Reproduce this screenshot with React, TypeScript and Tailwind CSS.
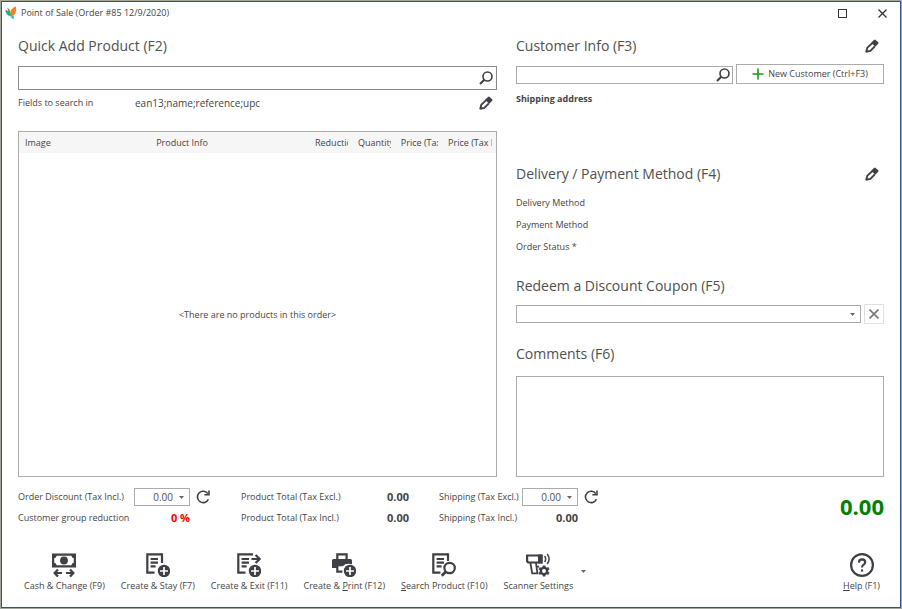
import type { ReactNode } from "react";

const DARK = "#3f3f46";

function SearchIcon() {
  return (
    <svg width="14" height="14" viewBox="0 0 14 14" fill="none" stroke={DARK} aria-hidden="true">
      <circle cx="8.5" cy="5.5" r="4.5" strokeWidth="1.6" />
      <path d="M5.3 8.7 L1 13" strokeWidth="2" />
    </svg>
  );
}

function PencilIcon() {
  return (
    <svg width="14" height="14" viewBox="0 0 14 14" aria-hidden="true">
      <path d="M9 0.9 Q9.8 0.3 10.6 0.9 L13.2 3.2 Q13.8 4 13.2 4.8 L10.3 7.8 L6 3.8 Z" fill={DARK} />
      <path d="M7 4.4 L2.4 8.6 L1.3 12.7 L5.4 11.9 L9.8 7.4" fill="none" stroke={DARK} strokeWidth="1.9" strokeLinejoin="round" />
    </svg>
  );
}

function RefreshIcon() {
  return (
    <svg width="14" height="14" viewBox="0 0 14 14" fill="none" stroke={DARK} strokeWidth="1.6" aria-hidden="true">
      <path d="M12.4 9.2 A5.7 5.7 0 1 1 11.8 3.6" />
      <path d="M13 0.4 V4.8 H8.4" />
    </svg>
  );
}

function ArrowDown() {
  return (
    <svg width="5" height="3" viewBox="0 0 5 3" aria-hidden="true">
      <path d="M0 0 H5 L2.5 3 Z" fill="#666" />
    </svg>
  );
}

function Logo() {
  return (
    <svg width="12" height="14" viewBox="0 0 12 14" aria-hidden="true">
      <path d="M10.6 0.3 Q12.4 6 8.6 9.6 L5.4 10.4 Q3.6 3.6 10.6 0.3Z" fill="#f5821f" />
      <path d="M0.2 3.4 Q2.6 5 5 5.2 L6 10 Q0.8 10 0.2 3.4Z" fill="#14b87c" />
      <path d="M2.2 1.8 Q4.8 2.6 5.2 6 L3.6 5.2Z" fill="#e8403a" />
      <path d="M5.4 10.4 L9 9.8 L8.4 13.6 L6.6 12Z" fill="#22c3e6" />
    </svg>
  );
}

// Sheet of paper shared by the order icons
function Sheet() {
  return (
    <>
      <path d="M8.5 19.6 H1.3 V1.3 H16" />
      <path d="M4.6 6 H12 M4.6 9.7 H12 M4.6 13.4 H9.6" />
    </>
  );
}

function PlusBadge() {
  return (
    <>
      <circle cx="18" cy="18" r="6.2" fill={DARK} stroke="none" />
      <path d="M18 14 V22 M14 18 H22" stroke="#fff" strokeWidth="1.7" />
    </>
  );
}

function ToolIcon({ children }: { children: ReactNode }) {
  return (
    <svg width="24" height="24" viewBox="0 0 24 24" fill="none" stroke={DARK} strokeWidth="2.2" aria-hidden="true">
      {children}
    </svg>
  );
}

function CashIcon() {
  return (
    <ToolIcon>
      <path d="M0 0.5 H24 V14.5 H0 Z" fill={DARK} stroke="none" />
      <path d="M4.6 2.8 H19.4 Q19.6 5 21.8 5.2 V9.8 Q19.6 10 19.4 12.2 H4.6 Q4.4 10 2.2 9.8 V5.2 Q4.4 5 4.6 2.8Z" fill="#fff" stroke="none" />
      <circle cx="12" cy="7.5" r="3.9" fill={DARK} stroke="none" />
      <path d="M3 20 H10 M14 20 H21" />
      <path d="M6 16.4 L2.6 20 L6 23.6 M18 16.4 L21.4 20 L18 23.6" />
    </ToolIcon>
  );
}

function StayIcon() {
  return (
    <ToolIcon>
      <Sheet />
      <path d="M16 0.3 V10" />
      <PlusBadge />
    </ToolIcon>
  );
}

function ExitIcon() {
  return (
    <ToolIcon>
      <Sheet />
      <path d="M14.5 6 H22 M18.6 2 L22.6 6 L18.6 10" />
      <PlusBadge />
    </ToolIcon>
  );
}

function PrintIcon() {
  return (
    <ToolIcon>
      <path d="M5.3 6.5 V1.3 H14.6 V6.5" />
      <path d="M1.5 6 H18.5 Q20 6 20 7.5 V11.2 Q13.5 10 10.8 13.2 H5 V15 H0 V7.5 Q0 6 1.5 6Z" fill={DARK} stroke="none" />
      <path d="M5.3 12 V18.6 H10.4" />
      <PlusBadge />
    </ToolIcon>
  );
}

function SearchProductIcon() {
  return (
    <ToolIcon>
      <Sheet />
      <path d="M16 0.3 V8" />
      <circle cx="17.6" cy="15" r="6.8" fill="#fff" stroke="none" />
      <circle cx="17.6" cy="15" r="5.2" />
      <path d="M14 18.6 L9.8 22.8" strokeWidth="2.8" />
    </ToolIcon>
  );
}

function ScannerIcon() {
  return (
    <ToolIcon>
      <path d="M1.1 2.5 H15 V9.5 H3.2 Q1.1 9.5 1.1 7.5Z" />
      <path d="M12 1.5 H16.8 V10.5 H12Z" fill={DARK} stroke="none" />
      <path d="M4.4 10 L6.2 20.4 H11.4 L10 10 M10 13.6 H13" strokeWidth="1.8" />
      <path d="M18.6 3 Q20.8 6 18.6 9 M21.2 1 Q25 6 21.2 11" strokeWidth="1.5" />
      <circle cx="18" cy="18" r="3.2" strokeWidth="2.4" />
      <path d="M18 12.4 V15 M18 21 V23.6 M13.1 15.2 L15.5 16.6 M20.5 19.4 L22.9 20.8 M13.1 20.8 L15.5 19.4 M20.5 16.6 L22.9 15.2" strokeWidth="2.6" />
    </ToolIcon>
  );
}

function HelpIcon() {
  return (
    <ToolIcon>
      <circle cx="12" cy="12" r="10.9" />
      <path d="M8.9 9.6 Q9 6.3 12.1 6.3 Q15.2 6.4 15.2 9.2 Q15.2 10.6 13.6 11.6 Q12 12.6 12 14.6" />
      <path d="M12 16.4 V18.6" />
    </ToolIcon>
  );
}

function Heading({ children }: { children: ReactNode }) {
  return <h2 className="text-[14px] leading-5 text-[#505050]">{children}</h2>;
}

function EditButton({ label }: { label: string }) {
  return (
    <button type="button" aria-label={label} className="flex size-4 items-center justify-center">
      <PencilIcon />
    </button>
  );
}

function AmountSelect({ id }: { id: string }) {
  return (
    <div className="relative h-[18px]">
      <select id={id} className="block h-full w-full appearance-none border border-[#ababab] bg-white pr-4 text-[10px] leading-4 text-[#505050] [text-align-last:right]">
        <option>0.00</option>
      </select>
      <span className="pointer-events-none absolute inset-y-0 right-1.5 flex items-center">
        <ArrowDown />
      </span>
    </div>
  );
}

interface ToolButtonProps {
  icon: ReactNode;
  children: ReactNode;
}

function ToolButton({ icon, children }: ToolButtonProps) {
  return (
    <button type="button" className="flex flex-col items-center gap-px whitespace-nowrap text-[9px] leading-4">
      {icon}
      <span>{children}</span>
    </button>
  );
}

const columns = [
  { name: "Image", width: "w-[27.5%]" },
  { name: "Product Info", width: "w-[33.3%]" },
  { name: "Reduction", width: "w-[9%]" },
  { name: "Quantity", width: "w-[9%]" },
  { name: "Price (Tax Excl.)", width: "w-[9.9%]" },
  { name: "Price (Tax Incl.)", width: "w-[11.3%]" },
];

export default function App() {
  return (
    <div className="flex min-h-screen flex-col border border-[#a3a69c] bg-white font-['Open_Sans','Noto_Sans',sans-serif] text-[#444]">
      <div className="flex flex-1 flex-col border border-[#2f5583]">
        <header className="flex h-[22px] items-center pr-2.5 pl-[3px]">
          <Logo />
          <h1 className="ml-1 flex-1 text-[9px] leading-4">Point of Sale (Order #85 12/9/2020)</h1>
          <button type="button" aria-label="Maximize" className="flex size-4 items-center justify-center">
            <span className="size-[9px] border border-[#333]" />
          </button>
          <button type="button" aria-label="Close" className="ml-6 flex size-4 items-center justify-center">
            <svg width="9" height="9" viewBox="0 0 9 9" stroke="#333" strokeWidth="1.3" aria-hidden="true">
              <path d="M0.5 0.5 L8.5 8.5 M8.5 0.5 L0.5 8.5" />
            </svg>
          </button>
        </header>

        <main className="grid flex-1 grid-cols-[479fr_368fr] gap-x-[19px] px-4 pt-3">
          {/* Products */}
          <section className="flex flex-col">
            <Heading>Quick Add Product (F2)</Heading>
            <div className="mt-2.5 flex h-[24px] items-center border border-[#8a8a8a] pr-[3px]">
              <input type="text" aria-label="Quick Add Product" className="h-full min-w-0 flex-1 px-1 text-[10px] outline-none" />
              <button type="button" aria-label="Search product"><SearchIcon /></button>
            </div>
            <div className="mt-[5px] flex h-4 items-center pr-[3px] text-[9px] leading-4">
              <span className="w-[117px]">Fields to search in</span>
              <span className="flex-1 text-[10px]">ean13;name;reference;upc</span>
              <EditButton label="Edit search fields" />
            </div>
            <div className="mt-5 flex flex-1 flex-col border border-[#ababab]">
              <table className="w-full table-fixed">
                <thead>
                  <tr className="h-[21px] bg-[#f6f6f6] text-left text-[9px] leading-4">
                    {columns.map((column) => (
                      <th key={column.name} className={`${column.width} pr-1 pl-1.5 font-normal`}>
                        <div className="overflow-hidden whitespace-nowrap">{column.name}</div>
                      </th>
                    ))}
                  </tr>
                </thead>
              </table>
              <p className="flex flex-1 items-center justify-center text-[9px]">&lt;There are no products in this order&gt;</p>
            </div>
          </section>

          {/* Customer, delivery and payment */}
          <section className="flex flex-col">
            <div className="flex items-center justify-between pr-1">
              <Heading>Customer Info (F3)</Heading>
              <EditButton label="Edit customer" />
            </div>
            <div className="mt-2 flex items-center gap-[3px]">
              <div className="mt-px flex h-[18px] flex-1 items-center border border-[#ababab] pr-0.5">
                <input type="text" aria-label="Customer" className="h-full min-w-0 flex-1 px-1 text-[10px] outline-none" />
                <button type="button" aria-label="Search customer"><SearchIcon /></button>
              </div>
              <button type="button" className="flex h-5 w-[148px] items-center justify-center gap-1 border border-[#ababab] text-[9px]">
                <svg width="12" height="12" viewBox="0 0 12 12" stroke="#149a14" strokeWidth="1.6" aria-hidden="true">
                  <path d="M6 0.5 V11.5 M0.5 6 H11.5" />
                </svg>
                New Customer (Ctrl+F3)
              </button>
            </div>
            <h3 className="mt-[7px] text-[9px] leading-4 font-bold">Shipping address</h3>

            <div className="mt-[57px] flex items-center justify-between pr-1">
              <Heading>Delivery / Payment Method (F4)</Heading>
              <EditButton label="Edit delivery and payment" />
            </div>
            <ul className="mt-[11px] flex flex-col gap-1.5 text-[9px] leading-4">
              <li>Delivery Method</li>
              <li>Payment Method</li>
              <li>Order Status *</li>
            </ul>

            <div className="mt-[21px]">
              <Heading>Redeem a Discount Coupon (F5)</Heading>
            </div>
            <div className="mt-2 flex items-center gap-[3px]">
              <div className="relative h-[18px] flex-1">
                <select aria-label="Discount coupon" className="block h-full w-full appearance-none border border-[#ababab] bg-white text-[10px]" />
                <span className="pointer-events-none absolute inset-y-0 right-1.5 flex items-center">
                  <ArrowDown />
                </span>
              </div>
              <button type="button" aria-label="Remove coupon" className="flex size-5 items-center justify-center border border-[#e0e0e0]">
                <svg width="10" height="10" viewBox="0 0 10 10" stroke="#777" strokeWidth="1.6" aria-hidden="true">
                  <path d="M0.5 0.5 L9.5 9.5 M9.5 0.5 L0.5 9.5" />
                </svg>
              </button>
            </div>

            <label htmlFor="comments" className="mt-5 text-[14px] leading-5 text-[#505050]">Comments (F6)</label>
            <textarea id="comments" className="mt-3 min-h-[100px] w-full flex-1 resize-none border border-[#ababab] p-1 text-[10px] outline-none" />
          </section>
        </main>

        {/* Totals */}
        <section className="flex items-start justify-between px-4 pt-[11px] text-[9px] leading-4">
          <div className="grid grid-cols-[116px_56px_51px_97px_71px_30px_83px_56px_20px] items-center gap-y-1 whitespace-nowrap">
            <label htmlFor="discount">Order Discount (Tax Incl.)</label>
            <AmountSelect id="discount" />
            <button type="button" aria-label="Refresh discount" className="pl-1.5"><RefreshIcon /></button>
            <span>Product Total (Tax Excl.)</span>
            <span className="text-right text-[11px] font-bold">0.00</span>
            <span />
            <label htmlFor="shipping">Shipping (Tax Excl.)</label>
            <AmountSelect id="shipping" />
            <button type="button" aria-label="Refresh shipping" className="pl-1.5"><RefreshIcon /></button>

            <span>Customer group reduction</span>
            <span className="text-right text-[11px] font-bold text-[#f00]">0 %</span>
            <span />
            <span>Product Total (Tax Incl.)</span>
            <span className="text-right text-[11px] font-bold">0.00</span>
            <span />
            <span>Shipping (Tax Incl.)</span>
            <span className="text-right text-[11px] font-bold">0.00</span>
            <span />
          </div>
          <strong className="mt-1.5 text-[22px] leading-6 font-bold text-[#008000]">0.00</strong>
        </section>

        <footer className="flex items-start gap-4 pt-[27px] pr-5 pb-[13px] pl-[22px]">
          <ToolButton icon={<CashIcon />}>Cash &amp; Change (F9)</ToolButton>
          <ToolButton icon={<StayIcon />}>Create &amp; Stay (F7)</ToolButton>
          <ToolButton icon={<ExitIcon />}>Create &amp; Exit (F11)</ToolButton>
          <ToolButton icon={<PrintIcon />}>Create &amp; <u>P</u>rint (F12)</ToolButton>
          <ToolButton icon={<SearchProductIcon />}><u>S</u>earch Product (F10)</ToolButton>
          <ToolButton icon={<ScannerIcon />}>Scanner Settings</ToolButton>
          <button type="button" aria-label="More scanner settings" className="mt-3.5 -ml-2 size-2"><ArrowDown /></button>
          <div className="ml-auto">
            <ToolButton icon={<HelpIcon />}><u>H</u>elp (F1)</ToolButton>
          </div>
        </footer>
      </div>
    </div>
  );
}
